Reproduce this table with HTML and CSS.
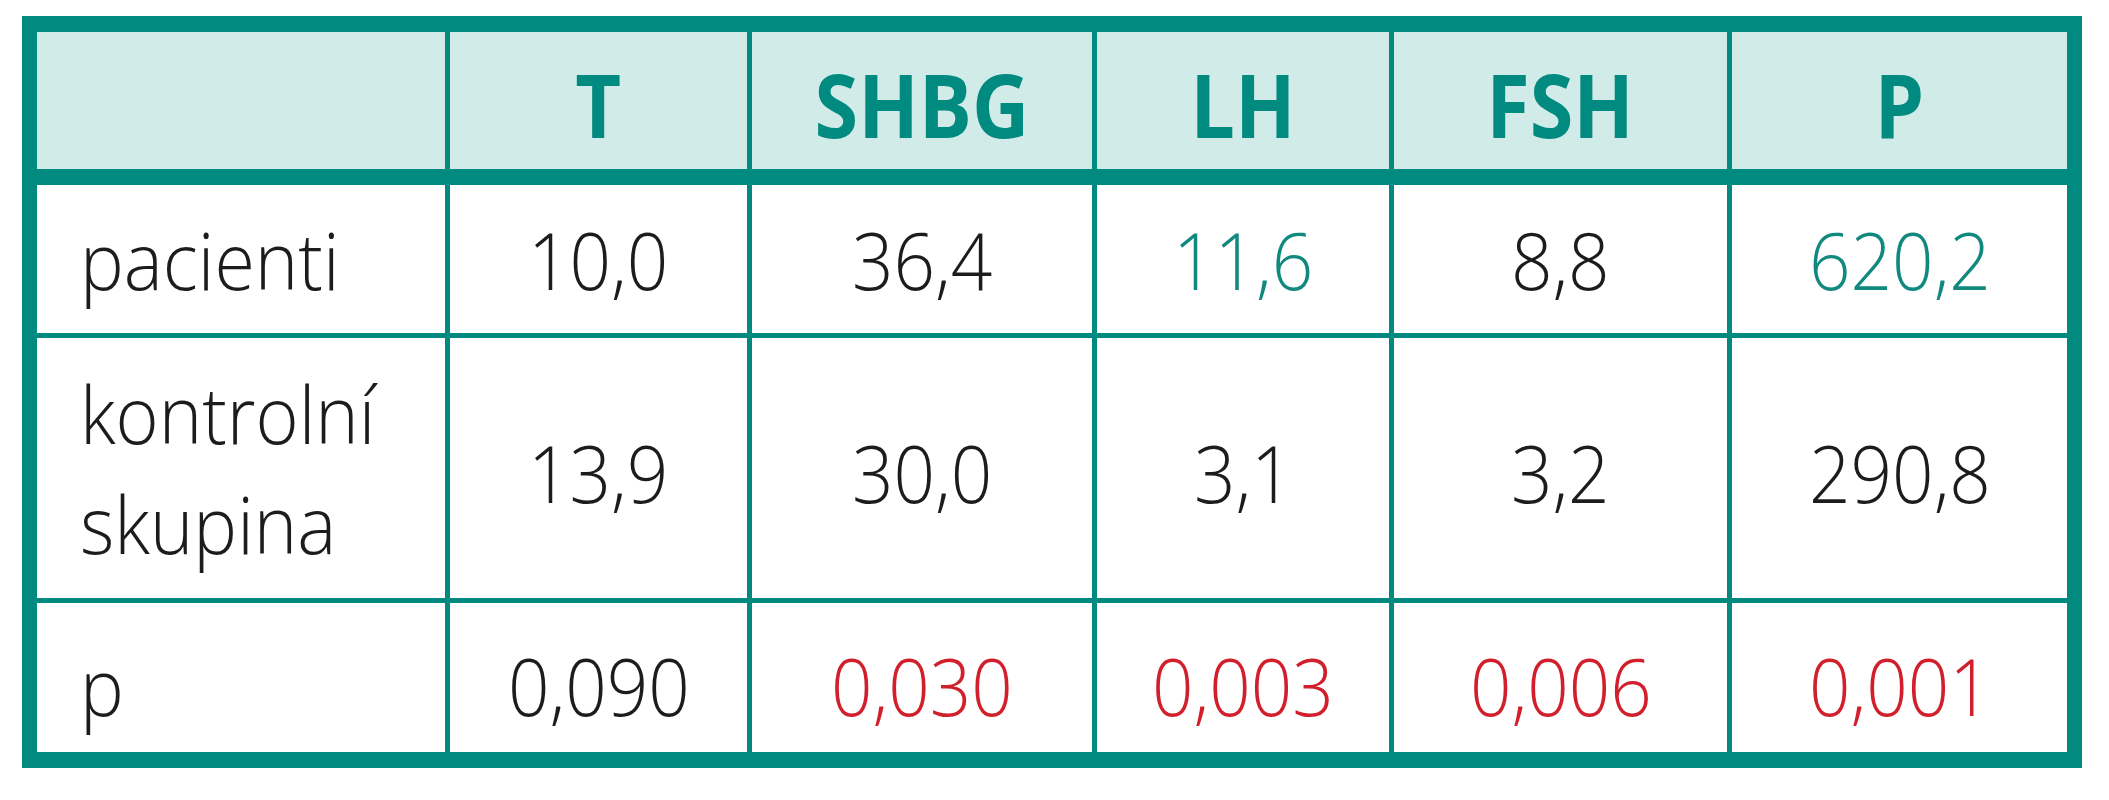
FILE: index.html
```html
<!DOCTYPE html>
<html lang="cs">
<head>
<meta charset="utf-8">
<title>Tabulka</title>
<link rel="stylesheet" href="styles.css">
</head>
<body>
<div class="page">
  <table class="data">
    <colgroup>
      <col class="c-label">
      <col class="c-t">
      <col class="c-shbg">
      <col class="c-lh">
      <col class="c-fsh">
      <col class="c-p">
    </colgroup>
    <thead>
      <tr>
        <th></th>
        <th><span class="txt">T</span></th>
        <th><span class="txt">SHBG</span></th>
        <th><span class="txt">LH</span></th>
        <th><span class="txt">FSH</span></th>
        <th><span class="txt">P</span></th>
      </tr>
    </thead>
    <tbody>
      <tr class="r1">
        <td class="label"><span class="lbl">pacienti</span></td>
        <td><span class="txt">10,0</span></td>
        <td><span class="txt">36,4</span></td>
        <td><span class="txt teal">11,6</span></td>
        <td><span class="txt">8,8</span></td>
        <td><span class="txt teal">620,2</span></td>
      </tr>
      <tr class="r2">
        <td class="label"><span class="lbl">kontrolní<br>skupina</span></td>
        <td><span class="txt">13,9</span></td>
        <td><span class="txt">30,0</span></td>
        <td><span class="txt">3,1</span></td>
        <td><span class="txt">3,2</span></td>
        <td><span class="txt">290,8</span></td>
      </tr>
      <tr class="r3">
        <td class="label"><span class="lbl">p</span></td>
        <td><span class="txt">0,090</span></td>
        <td><span class="txt red">0,030</span></td>
        <td><span class="txt red">0,003</span></td>
        <td><span class="txt red">0,006</span></td>
        <td><span class="txt red">0,001</span></td>
      </tr>
    </tbody>
  </table>
</div>
</body>
</html>
```

FILE: styles.css
```css
html, body {
  margin: 0;
  padding: 0;
  background: #ffffff;
}

.page {
  padding: 16px 0 0 22px;
}

.data {
  width: 2060px;
  table-layout: fixed;
  border-collapse: separate;
  border-spacing: 5px;
  background: #008a80;
  border-style: solid;
  border-color: #008a80;
  border-width: 11px 10px 11px 10px;
  font-family: "Open Sans", "Noto Sans", sans-serif;
  color: #1c1c1c;
}

.c-label { width: 408px; }
.c-t { width: 297px; }
.c-shbg { width: 340px; }
.c-lh { width: 292px; }
.c-fsh { width: 333px; }
.c-p { width: 335px; }

.data th,
.data td {
  box-sizing: border-box;
  padding: 0;
  text-align: center;
  vertical-align: middle;
  background: #ffffff;
}

.data th {
  height: 148px;
  background: #d0ebe8;
  border-bottom: 11px solid #008a80;
  color: #008a80;
  font-weight: 700;
  font-size: 87px;
  line-height: 110px;
  padding-top: 6px;
}

.data td {
  font-weight: 300;
  font-size: 80px;
  line-height: 110px;
}

.r1 td { height: 148px; }
.r2 td { height: 260px; padding-top: 8px; }
.r3 td { height: 149px; padding-top: 14px; }

.data td.label {
  text-align: left;
}

.r2 td.label { padding-top: 0; }

.txt {
  display: inline-block;
  transform: scaleX(0.91);
  transform-origin: center;
}

.lbl {
  display: inline-block;
  margin-left: 43px;
  transform: scaleX(0.92);
  transform-origin: left center;
  white-space: nowrap;
}

.teal { color: #12897f; }
.red { color: #d21f2c; }
```
